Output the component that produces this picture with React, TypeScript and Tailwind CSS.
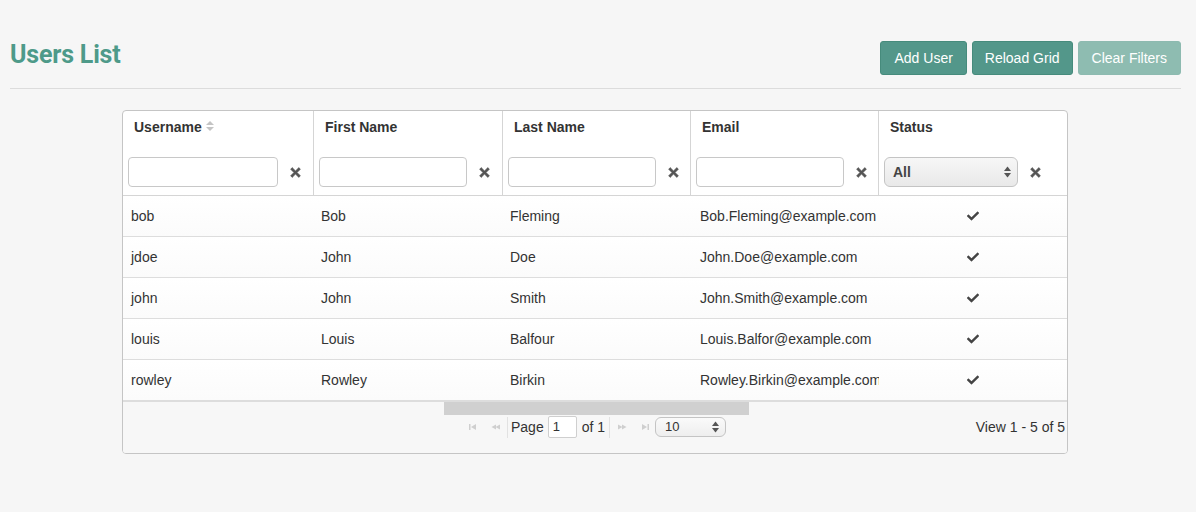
import React from "react";
import { FaCheck } from "react-icons/fa";

const rows = [
  ["bob", "Bob", "Fleming", "Bob.Fleming@example.com"],
  ["jdoe", "John", "Doe", "John.Doe@example.com"],
  ["john", "John", "Smith", "John.Smith@example.com"],
  ["louis", "Louis", "Balfour", "Louis.Balfor@example.com"],
  ["rowley", "Rowley", "Birkin", "Rowley.Birkin@example.com"],
];

const headers = ["Username", "First Name", "Last Name", "Email", "Status"];

function SortIcon() {
  return (
    <svg width="8" height="10" viewBox="0 0 8 10" className="ml-[4px] mt-[2px]">
      <path d="M4 0 L8 4 L0 4 Z" fill="#c4c4c4" />
      <path d="M4 10 L8 6 L0 6 Z" fill="#c4c4c4" />
    </svg>
  );
}

function UpDown({ color = "#555" }: { color?: string }) {
  return (
    <svg width="7" height="12" viewBox="0 0 7 12">
      <path d="M3.5 0.5 L7 5 L0 5 Z" fill={color} />
      <path d="M3.5 11.5 L7 7 L0 7 Z" fill={color} />
    </svg>
  );
}

function ClearX() {
  return (
    <div className="w-[34px] flex items-center justify-center">
      <svg width="11" height="11" viewBox="0 0 11 11">
        <path
          d="M2.2 0.6 L5.5 3.9 L8.8 0.6 L10.4 2.2 L7.1 5.5 L10.4 8.8 L8.8 10.4 L5.5 7.1 L2.2 10.4 L0.6 8.8 L3.9 5.5 L0.6 2.2 Z"
          fill="#555"
          stroke="#555"
          strokeWidth="0.6"
          strokeLinejoin="round"
        />
      </svg>
    </div>
  );
}

function PagerIcon({ kind }: { kind: "first" | "prev" | "next" | "last" }) {
  const c = "#cfcfcf";
  return (
    <svg width="10" height="8" viewBox="0 0 10 8">
      {kind === "first" && (
        <>
          <rect x="1" y="1" width="1.5" height="6" fill={c} />
          <path d="M3 4 L8 1 L8 7 Z" fill={c} />
        </>
      )}
      {kind === "prev" && (
        <>
          <path d="M0.5 4 L5 1.5 L5 6.5 Z" fill={c} />
          <path d="M4.5 4 L9 1.5 L9 6.5 Z" fill={c} />
        </>
      )}
      {kind === "next" && (
        <>
          <path d="M9.5 4 L5 1.5 L5 6.5 Z" fill={c} />
          <path d="M5.5 4 L1 1.5 L1 6.5 Z" fill={c} />
        </>
      )}
      {kind === "last" && (
        <>
          <path d="M7 4 L2 1 L2 7 Z" fill={c} />
          <rect x="7.5" y="1" width="1.5" height="6" fill={c} />
        </>
      )}
    </svg>
  );
}

export default function App() {
  return (
    <div
      className="min-h-[512px] w-full bg-[#f6f6f6] pl-[10px] pr-[15px] text-[#333]"
      style={{ fontFamily: '"Liberation Sans", Arial, sans-serif' }}
    >
      {/* Title bar */}
      <div className="flex items-start justify-between pt-[36px] pb-[13px] border-b border-[#dcdcdc]">
        <h1
          className="mt-[2px] text-[25px] leading-[34px] font-bold text-[#4e9a89] tracking-[-0.2px]"
          style={{ fontFamily: "Roboto, Inter, sans-serif" }}
        >
          Users List
        </h1>
        <div className="flex gap-[5px] mt-[5px]">
          <button className="h-[34px] px-[13px] rounded-[3px] border border-[#468b7c] bg-[#53978a] text-white text-[14px]">
            Add User
          </button>
          <button className="h-[34px] px-[12px] rounded-[3px] border border-[#468b7c] bg-[#53978a] text-white text-[14px]">
            Reload Grid
          </button>
          <button className="h-[34px] px-[13px] rounded-[3px] border border-[#8dbab0] bg-[#8ebcb1] text-white text-[14px]">
            Clear Filters
          </button>
        </div>
      </div>

      {/* Grid */}
      <div className="ml-[112px] mt-[21px] w-[946px] border border-[#c5c5c5] rounded-[4px] overflow-hidden bg-white">
        {/* Header */}
        <div className="grid grid-cols-[191px_189px_188px_188px_1fr] border-b border-[#d5d5d5]">
          {headers.map((h, i) => (
            <div
              key={h}
              className={`flex flex-col ${i < 4 ? "border-r border-[#d5d5d5]" : ""}`}
            >
              <div className="h-[46px] pt-[8px] pl-[11px] flex items-start">
                <span className="text-[14px] leading-[17px] font-bold text-[#333]">{h}</span>
                {i === 0 && <SortIcon />}
              </div>
              <div className="flex items-center pl-[5px] pb-[8px] h-[38px]">
                {i < 4 ? (
                  <input
                    className={`h-[30px] ${i === 0 ? "w-[150px]" : "w-[148px]"} rounded-[4px] border border-[#c8c8c8] bg-white outline-none`}
                  />
                ) : (
                  <div className="h-[30px] w-[134px] rounded-[6px] border border-[#c4c4c4] bg-gradient-to-b from-[#f7f7f7] to-[#e9e9e9] flex items-center justify-between pl-[8px] pr-[6px]">
                    <span className="text-[14px] font-bold text-[#444]">All</span>
                    <UpDown />
                  </div>
                )}
                <ClearX />
              </div>
            </div>
          ))}
        </div>

        {/* Rows */}
        {rows.map((r) => (
          <div
            key={r[0]}
            className="grid grid-cols-[191px_189px_188px_188px_1fr] h-[41px] border-b border-[#dddddd] bg-gradient-to-b from-white to-[#fbfbfb]"
          >
            <div className="flex items-center pl-[8px] text-[14px]">{r[0]}</div>
            <div className="flex items-center pl-[7px] text-[14px]">{r[1]}</div>
            <div className="flex items-center pl-[7px] text-[14px]">{r[2]}</div>
            <div className="flex items-center pl-[9px] text-[14px] whitespace-nowrap overflow-hidden">
              {r[3]}
            </div>
            <div className="flex items-center justify-center text-[#444]">
              <FaCheck size={12} />
            </div>
          </div>
        ))}

        {/* Footer */}
        <div className="border-t border-[#dddddd] bg-[#f7f7f7] flex flex-col h-[52px]">
          <div className="self-center w-[305px] h-[13px] bg-[#d0d0d0] ml-[2px]" />
          <div className="grid grid-cols-[1fr_auto_1fr] items-center h-[24px]">
            <div />
            <div className="flex items-center text-[14px] text-[#333] ml-[4px]">
              <div className="flex items-center gap-[13px] pr-[6px]">
                <PagerIcon kind="first" />
                <PagerIcon kind="prev" />
              </div>
              <div className="w-px h-[21px] bg-[#e2e2e2] mr-[3px]" />
              <span>Page</span>
              <div className="ml-[4px] w-[29px] h-[22px] border border-[#cfcfcf] rounded-[2px] bg-white flex items-center pl-[4px] text-[13px]">
                1
              </div>
              <span className="ml-[5px]">of 1</span>
              <div className="w-px h-[21px] bg-[#e2e2e2] ml-[4px] mr-[7px]" />
              <div className="flex items-center gap-[13px] pr-[5px]">
                <PagerIcon kind="next" />
                <PagerIcon kind="last" />
              </div>
              <div className="w-[71px] h-[20px] rounded-[6px] border border-[#c4c4c4] bg-gradient-to-b from-[#fafafa] to-[#eeeeee] flex items-center justify-between pl-[9px] pr-[6px] text-[13px]">
                <span>10</span>
                <UpDown />
              </div>
            </div>
            <div className="text-right pr-[2px] text-[14px]">View 1 - 5 of 5</div>
          </div>
        </div>
      </div>
    </div>
  );
}
